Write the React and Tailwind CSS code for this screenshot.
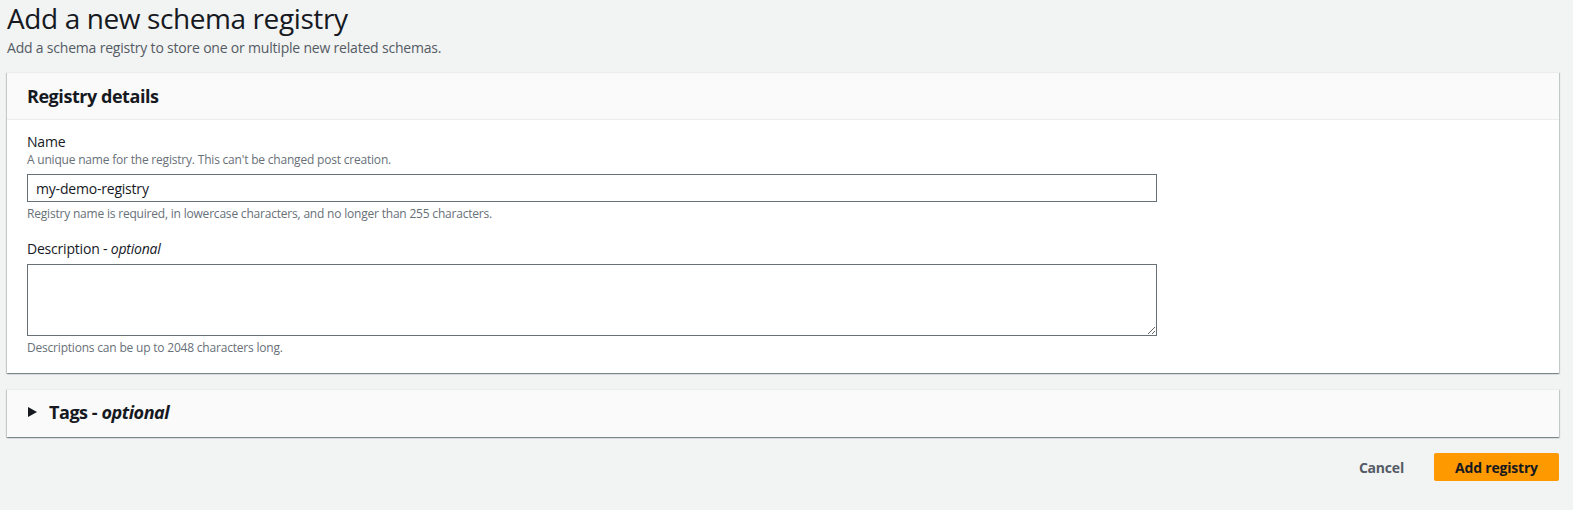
import { useState } from 'react';

const card = 'bg-white shadow-[0_1px_1px_0_rgba(0,28,36,0.3),1px_1px_1px_0_rgba(0,28,36,0.15),-1px_1px_1px_0_rgba(0,28,36,0.15)] border-t border-[#eaeded]';

function Field({ label, optional, hint, constraint, children }) {
  return (
    <div>
      <label className="block text-[14px] leading-[20px] text-[#16191f]">
        {label}
        {optional && (
          <>
            {' - '}
            <i>optional</i>
          </>
        )}
      </label>
      {hint && <p className="text-[12px] leading-[16px] text-[#687078]">{hint}</p>}
      <div className={hint ? 'mt-[6px]' : 'mt-[5px]'}>{children}</div>
      {constraint && <p className="mt-[4px] text-[12px] leading-[16px] text-[#687078]">{constraint}</p>}
    </div>
  );
}

export default function App() {
  const [name, setName] = useState('my-demo-registry');
  const [desc, setDesc] = useState('');

  return (
    <div className="min-h-[510px] bg-[#f2f3f3] pl-[7px] pr-[14px] font-['Open_Sans',sans-serif] tracking-[-0.2px] text-[#16191f]">
      <h1 className="pt-[1px] text-[28px] leading-[34px] font-normal tracking-[-0.4px]">Add a new schema registry</h1>
      <p className="mt-[3px] text-[14px] leading-[20px] text-[#545b64]">
        Add a schema registry to store one or multiple new related schemas.
      </p>

      <section className={`mt-[14px] ${card}`}>
        <div className="flex h-[47px] items-center border-b border-[#eaeded] bg-[#fafafa] px-[20px]">
          <h2 className="text-[18px] leading-[22px] font-bold tracking-[-0.45px]">Registry details</h2>
        </div>
        <div className="space-y-[17px] px-[20px] pt-[12px] pb-[17px]">
          <Field
            label="Name"
            hint="A unique name for the registry. This can't be changed post creation."
            constraint="Registry name is required, in lowercase characters, and no longer than 255 characters."
          >
            <input
              value={name}
              onChange={(e) => setName(e.target.value)}
              className="block h-[28px] w-[1130px] border border-[#687078] bg-white px-[8px] text-[14px] text-[#16191f] outline-none"
            />
          </Field>
          <Field label="Description" optional constraint="Descriptions can be up to 2048 characters long.">
            <textarea
              value={desc}
              onChange={(e) => setDesc(e.target.value)}
              className="block h-[72px] w-[1130px] border border-[#687078] bg-white px-[8px] py-[4px] text-[14px] outline-none"
            />
          </Field>
        </div>
      </section>

      <section className={`mt-[16px] ${card} bg-[#fafafa]`}>
        <button type="button" className="flex h-[47px] w-full items-center gap-[12px] bg-[#fafafa] px-[20px] pb-[4px] text-left">
          <svg width="9" height="10" viewBox="0 0 9 10" className="ml-[1px]">
            <path d="M0 0 L9 5 L0 10 Z" fill="#16191f" />
          </svg>
          <span className="text-[18px] leading-[22px] font-bold tracking-[-0.45px]">
            Tags - <i>optional</i>
          </span>
        </button>
      </section>

      <div className="mt-[16px] flex items-center justify-end gap-[30px]">
        <button type="button" className="text-[14px] font-bold text-[#545b64]">Cancel</button>
        <button type="button" className="h-[28px] w-[125px] rounded-[2px] bg-[#ff9900] text-[14px] font-bold text-[#16191f]">
          Add registry
        </button>
      </div>
    </div>
  );
}
